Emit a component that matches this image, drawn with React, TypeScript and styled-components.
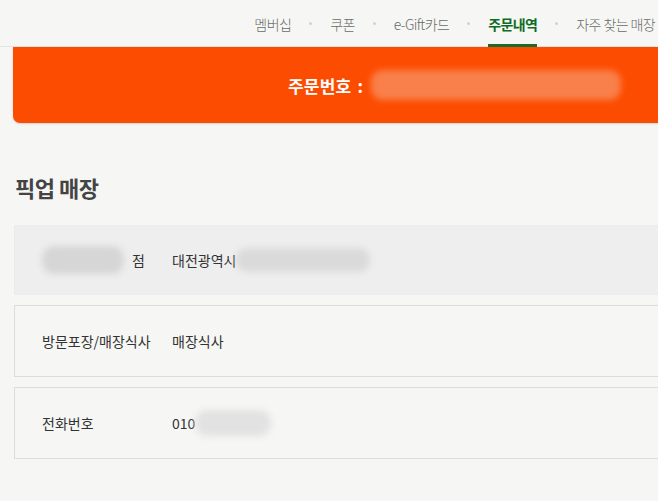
import React from 'react';
import styled, { createGlobalStyle } from 'styled-components';

const GlobalStyle = createGlobalStyle`
  html, body {
    margin: 0;
    padding: 0;
    background: #f6f7f4;
    overflow: hidden;
  }
  body {
    font-family: "Noto Sans CJK KR", "Noto Sans", sans-serif;
    color: #333;
  }
`;

const navItems = ['멤버십', '쿠폰', 'e-Gift카드', '주문내역', '자주 찾는 매장'];

type Row = {
  label: React.ReactNode;
  value: React.ReactNode;
  shaded?: boolean;
};

const App = () => {
  const rows: Row[] = [
    {
      label: (
        <>
          <Blur $w={82} $h={28} $tone="#d6d6d6" />
          <span>점</span>
        </>
      ),
      value: (
        <>
          <span>대전광역시</span>
          <Blur $w={134} $h={24} $tone="#dadada" />
        </>
      ),
      shaded: true,
    },
    { label: '방문포장/매장식사', value: '매장식사' },
    {
      label: '전화번호',
      value: (
        <>
          <span>010</span>
          <Blur $w={76} $h={26} $tone="#e2e2e2" />
        </>
      ),
    },
  ];

  return (
    <Page>
      <GlobalStyle />
      <Nav>
        {navItems.map((item, i) => (
          <React.Fragment key={item}>
            {i > 0 && <Dot />}
            <NavItem $active={item === '주문내역'}>{item}</NavItem>
          </React.Fragment>
        ))}
      </Nav>
      <Banner>
        <BannerLabel>주문번호 :</BannerLabel>
        <Blur $w={250} $h={30} $tone="#f9804a" />
      </Banner>
      <Section>
        <Heading>픽업 매장</Heading>
        <Rows>
          {rows.map((row, i) => (
            <InfoRow key={i} $shaded={row.shaded}>
              <Label>{row.label}</Label>
              <Value>{row.value}</Value>
            </InfoRow>
          ))}
        </Rows>
      </Section>
    </Page>
  );
};

const Page = styled.div`
  width: 658px;
  height: 501px;
  overflow: hidden;
`;

const Nav = styled.nav`
  display: flex;
  align-items: stretch;
  justify-content: flex-end;
  height: 47px;
  padding-right: 3px;
  border-bottom: 1px solid #e4e5e2;
  gap: 18px;
  box-sizing: border-box;
`;

const Dot = styled.span`
  align-self: center;
  width: 3px;
  height: 3px;
  border-radius: 50%;
  background: #d2d2d2;
`;

const NavItem = styled.a<{ $active?: boolean }>`
  display: flex;
  align-items: center;
  font-size: 14px;
  letter-spacing: -0.6px;
  white-space: nowrap;
  color: ${(p) => (p.$active ? '#0e6b25' : '#6a6a6a')};
  font-weight: ${(p) => (p.$active ? 700 : 300)};
  box-sizing: border-box;
  padding-top: 3px;
  border-bottom: 3px solid ${(p) => (p.$active ? '#1c6b2d' : 'transparent')};
  margin-bottom: -1px;
`;

const Banner = styled.div`
  display: flex;
  align-items: center;
  gap: 8px;
  margin-left: 13px;
  height: 76px;
  padding-left: 275px;
  background: #fc4c02;
  border-bottom-left-radius: 7px;
  box-shadow: 0 1px 2px rgba(0, 0, 0, 0.15);
`;

const BannerLabel = styled.span`
  color: #fff;
  font-size: 17px;
  font-weight: 700;
  letter-spacing: 0.2px;
  word-spacing: 2px;
  white-space: nowrap;
`;

const Blur = styled.span<{ $w: number; $h: number; $tone: string }>`
  display: inline-block;
  width: ${(p) => p.$w}px;
  height: ${(p) => p.$h}px;
  background: ${(p) => p.$tone};
  border-radius: 12px;
  filter: blur(3px);
  flex-shrink: 0;
`;

const Section = styled.section`
  padding: 49px 0 0 14px;
`;

const Heading = styled.h2`
  margin: 0 0 0 1px;
  font-size: 22px;
  line-height: 30px;
  font-weight: 700;
  color: #444;
  letter-spacing: -0.5px;
`;

const Rows = styled.div`
  display: flex;
  flex-direction: column;
  gap: 10px;
  margin-top: 23px;
`;

const InfoRow = styled.div<{ $shaded?: boolean }>`
  display: flex;
  align-items: center;
  height: ${(p) => (p.$shaded ? 70 : 72)}px;
  box-sizing: border-box;
  padding-left: 27px;
  background: ${(p) => (p.$shaded ? '#eeeeee' : 'transparent')};
  border: 1px solid ${(p) => (p.$shaded ? '#ebebeb' : '#dcdcdc')};
  border-right: none;
  font-size: 14px;
  color: #333;
`;

const Label = styled.div`
  display: flex;
  align-items: center;
  gap: 8px;
  width: 130px;
  white-space: nowrap;
`;

const Value = styled.div`
  display: flex;
  align-items: center;
  white-space: nowrap;
`;

export default App;
